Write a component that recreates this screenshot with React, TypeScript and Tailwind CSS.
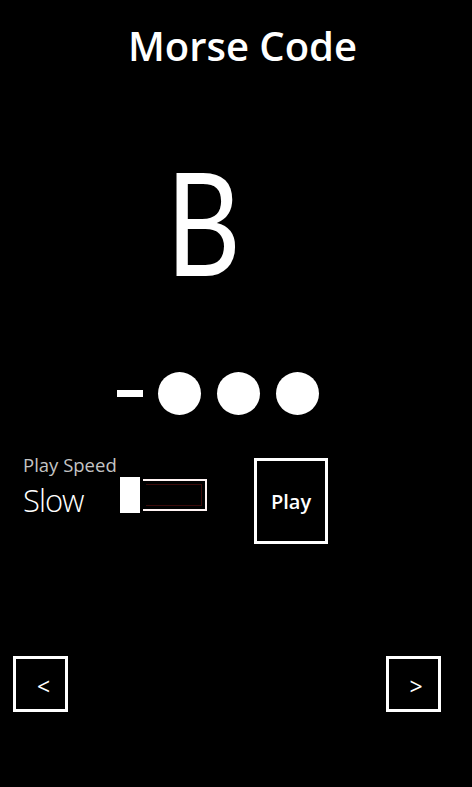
export default function App() {
  return (
    <div className="h-[787px] w-full bg-black text-white font-['Open_Sans',sans-serif] overflow-hidden">
      {/* Title */}
      <h1 className="pt-[26px] pl-[13px] text-center text-[40px] leading-[40px] font-semibold">Morse Code</h1>

      {/* Current letter */}
      <div className="mt-[83px] pl-[166px] h-[144px]">
        <span className="inline-block origin-left scale-x-[0.81] font-['Lato',sans-serif] text-[143px] leading-[144px] font-normal">B</span>
      </div>

      {/* Morse pattern */}
      <div className="mt-[79px] pl-[117px] flex items-center">
        <div className="w-[26px] h-[7px] bg-white" />
        <div className="ml-[15px] w-[43px] h-[43px] rounded-full bg-white" />
        <div className="ml-[16px] w-[43px] h-[43px] rounded-full bg-white" />
        <div className="ml-[16px] w-[43px] h-[43px] rounded-full bg-white" />
      </div>

      {/* Speed + play */}
      <div className="mt-[40px] pl-[23px] flex items-start">
        <div className="w-[97px]">
          <div className="text-[18.5px] leading-[20px] text-[#c4c4c4]">Play Speed</div>
          <div className="mt-[9px] text-[31px] leading-[32px] font-light tracking-[-1px]">Slow</div>
        </div>
        <div className="mt-[22px] flex items-center">
          <div className="w-[20px] h-[36px] bg-white" />
          <div className="ml-[3px] w-[64px] h-[32px] border-2 border-l-0 border-[#fff4f4] p-[3px]">
            <div className="w-full h-full border border-l-0 border-[#3a0a0a]" />
          </div>
        </div>
        <button className="ml-[47px] mt-[3px] w-[74px] h-[86px] border-[3px] border-white flex items-center justify-center pt-[2px] text-[20px] font-semibold">
          Play
        </button>
      </div>

      {/* Navigation */}
      <div className="mt-[112px] pl-[13px] pr-[31px] flex justify-between">
        <button className="w-[55px] h-[56px] border-[3px] border-white flex items-center justify-center pl-[6px] pt-[4px] text-[23px] font-normal">
          &lt;
        </button>
        <button className="w-[55px] h-[56px] border-[3px] border-white flex items-center justify-center pl-[5px] pt-[4px] text-[23px] font-normal">
          &gt;
        </button>
      </div>
    </div>
  );
}
